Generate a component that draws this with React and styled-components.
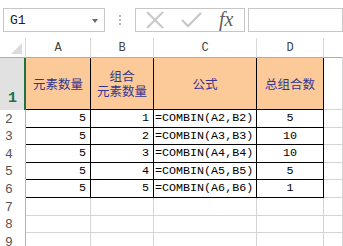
import React from "react";
import styled, { createGlobalStyle } from "styled-components";

const Global = createGlobalStyle`
  html, body { margin: 0; padding: 0; background: #fff; overflow: hidden; }
  body { width: 343px; height: 246px; }
`;

const Page = styled.div`
  width: 343px;
  height: 246px;
  overflow: hidden;
  background: #fff;
  font-family: "Liberation Mono", monospace;
`;

const FormulaBar = styled.div`
  display: flex;
  align-items: flex-start;
  height: 38px;
  padding: 8px 0 0 3px;
  box-sizing: border-box;
`;

const Box = styled.div`
  box-sizing: border-box;
  height: 24px;
  border: 1px solid #c6c6c6;
  background: #fff;
  display: flex;
  align-items: center;
  position: relative;
`;

const NameBox = styled(Box)`
  width: 102px;
  padding-left: 6px;
  font-size: 13px;
  color: #222;
`;

const Caret = styled.span`
  position: absolute;
  right: 6px;
  top: 10px;
  width: 0;
  height: 0;
  border-left: 3.5px solid transparent;
  border-right: 3.5px solid transparent;
  border-top: 4px solid #6a6a6a;
`;

const Dots = styled.div`
  width: 30px;
  height: 24px;
  display: flex;
  flex-direction: column;
  align-items: center;
  justify-content: center;
  gap: 2px;
  span { width: 2px; height: 2px; background: #b4b4b4; }
`;

const FxBox = styled(Box)`
  width: 110px;
  padding-left: 9px;
`;

const Fx = styled.span`
  font-family: "Liberation Serif", serif;
  font-style: italic;
  font-size: 20px;
  color: #5e5e5e;
  margin-left: 16px;
  line-height: 1;
  margin-top: -2px;
`;

const InputBox = styled(Box)`
  width: 95px;
  margin-left: 3px;
`;

const Sheet = styled.div`
  display: grid;
  grid-template-columns: 26px 65px 63px 103px 67px 1fr;
  grid-template-rows: 20px 52px 18px 17px 18px 17px 18px 18px 17px 18px;
`;

const ColHead = styled.div`
  box-sizing: border-box;
  border-bottom: 1px solid #ababab;
  border-right: 1px solid ${(p) => (p.$last ? "transparent" : "#d8d8d8")};
  display: flex;
  align-items: flex-end;
  justify-content: center;
  padding-bottom: 2px;
  font-size: 12px;
  color: #444;
  position: relative;
`;

const Corner = styled(ColHead)`
  &::after {
    content: "";
    position: absolute;
    right: 3px;
    bottom: 3px;
    width: 0;
    height: 0;
    border-left: 11px solid transparent;
    border-bottom: 11px solid #dcdcdc;
  }
`;

const RowHead = styled.div`
  box-sizing: border-box;
  border-right: ${(p) => (p.$sel ? "2px solid #217346" : "1px solid #b4b4b4")};
  background: ${(p) => (p.$sel ? "#e1e1e1" : "#fff")};
  color: ${(p) => (p.$sel ? "#217346" : "#555")};
  font-size: ${(p) => (p.$sel ? "15px" : "13px")};
  font-weight: ${(p) => (p.$sel ? "bold" : "normal")};
  display: flex;
  align-items: ${(p) => (p.$sel ? "flex-end" : "center")};
  padding-left: ${(p) => (p.$sel ? "8px" : "5px")};
  padding-bottom: ${(p) => (p.$sel ? "3px" : "0")};
`;

const Cell = styled.div`
  box-sizing: border-box;
  border-right: 1px solid ${(p) => (p.$table ? "#000" : "#d4d4d4")};
  border-bottom: 1px solid ${(p) => (p.$table ? "#000" : "#d4d4d4")};
  background: ${(p) => (p.$head ? "#fcca98" : "#fff")};
  display: flex;
  flex-direction: column;
  align-items: ${(p) =>
    p.$align === "right" ? "flex-end" : p.$align === "left" ? "flex-start" : "center"};
  justify-content: center;
  padding: ${(p) => (p.$align === "right" ? "0 4px 1px 0" : p.$align === "left" ? "0 0 1px 1px" : "0 0 1px 0")};
  font-size: 11.7px;
  color: #000;
  white-space: nowrap;
  overflow: hidden;
`;

const HeadText = styled.span`
  font-family: "Noto Sans CJK SC", sans-serif;
  font-size: 12.5px;
  line-height: 15px;
  color: #35358f;
`;

const rows = [
  [5, 1, "=COMBIN(A2,B2)", 5],
  [5, 2, "=COMBIN(A3,B3)", 10],
  [5, 3, "=COMBIN(A4,B4)", 10],
  [5, 4, "=COMBIN(A5,B5)", 5],
  [5, 5, "=COMBIN(A6,B6)", 1],
];

export default function App() {
  return (
    <Page>
      <Global />
      <FormulaBar>
        <NameBox>
          G1
          <Caret />
        </NameBox>
        <Dots>
          <span />
          <span />
          <span />
        </Dots>
        <FxBox>
          <svg width="20" height="18" viewBox="0 0 20 18">
            <path d="M2 1 L18 17 M18 1 L2 17" stroke="#c9c9c9" strokeWidth="2.2" fill="none" />
          </svg>
          <svg width="22" height="16" viewBox="0 0 22 16" style={{ marginLeft: 16 }}>
            <path d="M1 8 L7 14 L20 1" stroke="#c9c9c9" strokeWidth="2.4" fill="none" />
          </svg>
          <Fx>fx</Fx>
        </FxBox>
        <InputBox />
      </FormulaBar>
      <Sheet>
        <Corner />
        <ColHead>A</ColHead>
        <ColHead>B</ColHead>
        <ColHead>C</ColHead>
        <ColHead>D</ColHead>
        <ColHead $last />

        <RowHead $sel>1</RowHead>
        <Cell $table $head>
          <HeadText>元素数量</HeadText>
        </Cell>
        <Cell $table $head>
          <HeadText>组合</HeadText>
          <HeadText>元素数量</HeadText>
        </Cell>
        <Cell $table $head>
          <HeadText>公式</HeadText>
        </Cell>
        <Cell $table $head>
          <HeadText>总组合数</HeadText>
        </Cell>
        <Cell />

        {rows.map((r, i) => (
          <React.Fragment key={i}>
            <RowHead>{i + 2}</RowHead>
            <Cell $table $align="right">{r[0]}</Cell>
            <Cell $table $align="right">{r[1]}</Cell>
            <Cell $table $align="left">{r[2]}</Cell>
            <Cell $table>{r[3]}</Cell>
            <Cell />
          </React.Fragment>
        ))}

        {[7, 8, 9].map((n) => (
          <React.Fragment key={n}>
            <RowHead>{n}</RowHead>
            <Cell />
            <Cell />
            <Cell />
            <Cell />
            <Cell />
          </React.Fragment>
        ))}
      </Sheet>
    </Page>
  );
}
